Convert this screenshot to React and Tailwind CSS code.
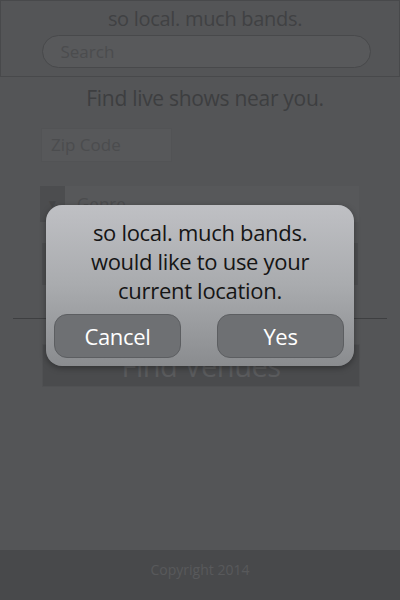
export default function App() {
  const font = { fontFamily: '"Open Sans", "Liberation Sans", sans-serif' };

  return (
    <div className="relative w-[400px] h-[600px] flex flex-col bg-[#545557] overflow-hidden" style={font}>
      {/* Header */}
      <div className="h-[77px] border border-[#48494b] flex flex-col items-center pt-[4px] pl-[10px]">
        <h1 className="text-[20px] leading-[28px] text-[#404143] tracking-[-0.3px]">so local. much bands.</h1>
        <div className="mt-[2px] w-[329px] h-[33px] ml-[2px] rounded-full border border-[#48494b] bg-[#58595b] flex items-center px-[18px]">
          <span className="text-[17px] text-[#4b4c4e]">Search</span>
        </div>
      </div>

      {/* Main */}
      <div className="flex-1 flex flex-col">
        <p className="text-center text-[21px] leading-[28px] mt-[7px] pl-[10px] text-[#3d3e40] tracking-[-0.3px]">Find live shows near you.</p>

        <div className="ml-[41px] mt-[16px] w-[131px] h-[34px] bg-[#57585a] border border-[#525355] flex items-center px-[9px]">
          <span className="text-[17px] text-[#4b4c4e]">Zip Code</span>
        </div>

        <div className="ml-[40px] mt-[24px] w-[319px] h-[36px] flex bg-[#57585a]">
          <div className="w-[25px] bg-[#4c4d4f] flex items-center justify-center text-[#444547] text-[12px]">▼</div>
          <div className="flex-1 flex items-center px-[12px] text-[17px] text-[#4b4c4e]">Genre</div>
        </div>

        <div className="ml-[42px] mt-[21px] w-[316px] h-[42px] bg-[#4d4e50]" />

        <div className="mt-[23px] flex items-center px-[13px]">
          <div className="flex-1 h-px bg-[#3e3f41]" />
          <span className="px-[12px] text-[14px] text-[#5e6062]">or</span>
          <div className="flex-1 h-px bg-[#3e3f41]" />
        </div>

        <div className="ml-[42px] mt-[15px] w-[318px] h-[43px] bg-[#4a4b4d] border border-[#505153] flex items-center justify-center">
          <span className="text-[29px] text-[#5a5b5d] tracking-[-0.5px]">Find Venues</span>
        </div>
      </div>

      {/* Footer */}
      <div className="h-[50px] bg-[#48494b] flex justify-center pt-[10px]">
        <span className="text-[14px] leading-[20px] text-[#58595b]">Copyright 2014</span>
      </div>

      {/* Location alert */}
      <div className="absolute left-[46px] top-[205px] w-[308px] h-[161px] rounded-[16px] bg-gradient-to-b from-[#bfc0c4] via-[#a9abae] to-[#8a8c8f] flex flex-col items-center pt-[13px] shadow-[0_2px_6px_rgba(0,0,0,0.35)]">
        <p className="text-center text-[22px] leading-[29px] text-[#151515] tracking-[-0.3px]">
          so local. much bands.<br />would like to use your<br />current location.
        </p>
        <div className="mt-[9px] w-full flex gap-[36px] pl-[8px]">
          <button className="w-[127px] h-[44px] rounded-[13px] bg-[#6e7073] border border-[#5c5e61] text-white text-[22px] tracking-[-0.3px]">Cancel</button>
          <button className="w-[127px] h-[44px] rounded-[13px] bg-[#6e7073] border border-[#5c5e61] text-white text-[22px] tracking-[-0.3px]">Yes</button>
        </div>
      </div>
    </div>
  );
}
